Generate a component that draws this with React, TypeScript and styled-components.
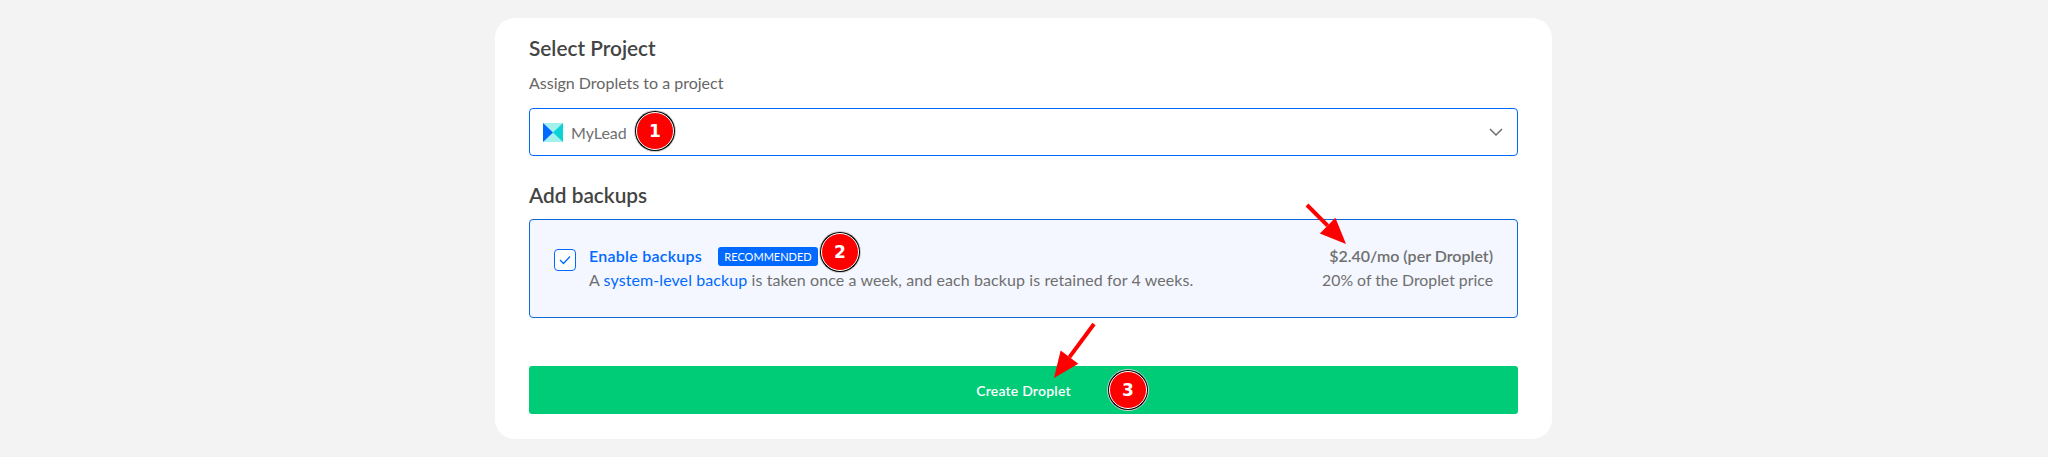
import React from "react";
import styled, { createGlobalStyle } from "styled-components";

const GlobalStyle = createGlobalStyle`
  html, body {
    margin: 0;
    padding: 0;
    height: 457px;
    overflow: hidden;
    background: #f3f3f3;
    font-family: "Lato", "Liberation Sans", sans-serif;
  }
`;

const Page = styled.div`
  width: 2048px;
  height: 457px;
  padding-top: 18px;
  box-sizing: border-box;
`;

const Card = styled.div`
  position: relative;
  width: 1057px;
  height: 421px;
  margin-left: 495px;
  padding: 18px 34px 0;
  box-sizing: border-box;
  background: #fff;
  border-radius: 20px;
`;

const Heading = styled.h2<{ $gap: number }>`
  margin: 0 0 ${(p) => p.$gap}px;
  font-size: 20.8px;
  line-height: 24px;
  font-weight: 600;
  color: #444;
`;

const SubText = styled.p`
  margin: 0 0 15px;
  font-size: 16px;
  line-height: 20px;
  color: #666;
`;

const Select = styled.div`
  height: 48px;
  margin-bottom: 27px;
  padding: 0 13px;
  box-sizing: border-box;
  display: flex;
  align-items: center;
  justify-content: space-between;
  border: 1.5px solid #0069ff;
  border-radius: 4px;
`;

const SelectChevron = styled.svg`
  margin-right: 1px;
`;

const Project = styled.div`
  display: flex;
  align-items: center;
  gap: 8px;
  font-size: 16px;
  color: #6f6f6f;
`;

const BackupBox = styled.div`
  height: 99px;
  margin-bottom: 48px;
  padding: 0 24px 2px;
  box-sizing: border-box;
  display: flex;
  align-items: center;
  justify-content: space-between;
  background: #f4f7ff;
  border: 1.5px solid #0d68d9;
  border-radius: 4px;
`;

const BackupLeft = styled.div`
  display: flex;
  align-items: flex-start;
  gap: 13px;
`;

const Checkbox = styled.div`
  width: 22px;
  height: 22px;
  margin-top: 5px;
  box-sizing: border-box;
  display: flex;
  align-items: center;
  justify-content: center;
  background: #fff;
  border: 1.5px solid #0069ff;
  border-radius: 4px;
`;

const TitleRow = styled.div`
  display: flex;
  align-items: center;
  gap: 16px;
  height: 24px;
`;

const BackupTitle = styled.span`
  font-size: 16px;
  font-weight: 600;
  letter-spacing: 0.25px;
  color: #0069ff;
`;

const Pill = styled.span`
  width: 100px;
  height: 19px;
  margin-top: 1px;
  display: inline-flex;
  align-items: center;
  justify-content: center;
  background: #0069ff;
  border-radius: 3px;
  font-size: 11px;
  color: #fff;
`;

const Description = styled.div`
  font-size: 16px;
  line-height: 24px;
  letter-spacing: 0.09px;
  color: #6f6f6f;
`;

const Anchor = styled.span`
  color: #0069ff;
`;

const Price = styled.div`
  text-align: right;
  font-size: 16px;
  line-height: 24px;
  color: #6f6f6f;
`;

const PriceMain = styled.div`
  font-weight: 600;
`;

const PriceNote = styled.div`
  font-size: 15.8px;
`;

const CreateButton = styled.div`
  height: 48px;
  display: flex;
  align-items: center;
  justify-content: center;
  background: #00cc78;
  border-radius: 3px;
  font-size: 14px;
  font-weight: 600;
  letter-spacing: 0.2px;
  color: #fff;
`;

const Marker = styled.div<{ $left: number; $top: number }>`
  position: absolute;
  left: ${(p) => p.$left}px;
  top: ${(p) => p.$top}px;
  width: 36px;
  height: 36px;
  display: flex;
  align-items: center;
  justify-content: center;
  background: #ff0000;
  border-radius: 50%;
  border: 1px solid #fff;
  box-shadow: 0 0 0 1px #000, 0 0 0 2px #ccc;
  font-family: "DejaVu Sans", sans-serif;
  font-size: 17px;
  font-weight: 700;
  color: #fff;
  box-sizing: content-box;
`;

const ArrowLayer = styled.svg`
  position: absolute;
  left: 0;
  top: 0;
  pointer-events: none;
`;

const Arrow = ({ x1, y1, x2, y2 }: { x1: number; y1: number; x2: number; y2: number }) => {
  const len = Math.hypot(x2 - x1, y2 - y1);
  const ux = (x2 - x1) / len;
  const uy = (y2 - y1) / len;
  const headBase = 26;
  const headHalf = 11;
  const bx = x2 - ux * headBase;
  const by = y2 - uy * headBase;
  return (
    <>
      <line x1={x1} y1={y1} x2={bx} y2={by} stroke="#ff0000" strokeWidth={4} />
      <polygon
        fill="#ff0000"
        points={`${x2},${y2} ${bx - uy * headHalf},${by + ux * headHalf} ${bx + uy * headHalf},${by - ux * headHalf}`}
      />
    </>
  );
};

const App = () => (
  <>
    <GlobalStyle />
    <Page>
      <Card>
        <Heading $gap={13}>Select Project</Heading>
        <SubText>Assign Droplets to a project</SubText>
        <Select>
          <Project>
            <svg width="20" height="19" viewBox="0 0 20 19">
              <rect width="20" height="19" fill="#a2f1ef" />
              <polygon points="0,0 10,9.5 0,19" fill="#0069ff" />
              <polygon points="20,0 10,9.5 20,19" fill="#0bd3d3" />
            </svg>
            MyLead
          </Project>
          <SelectChevron width="14" height="8" viewBox="0 0 14 8" fill="none">
            <path d="M1 1l6 6 6-6" stroke="#6f6f6f" strokeWidth="1.5" />
          </SelectChevron>
        </Select>
        <Heading $gap={12}>Add backups</Heading>
        <BackupBox>
          <BackupLeft>
            <Checkbox>
              <svg width="12" height="10" viewBox="0 0 12 10" fill="none">
                <path d="M1 5l3.5 3.5L11 1.5" stroke="#0069ff" strokeWidth="1.3" />
              </svg>
            </Checkbox>
            <div>
              <TitleRow>
                <BackupTitle>Enable backups</BackupTitle>
                <Pill>RECOMMENDED</Pill>
              </TitleRow>
              <Description>
                A <Anchor>system-level backup</Anchor> is taken once a week, and each backup is retained for 4 weeks.
              </Description>
            </div>
          </BackupLeft>
          <Price>
            <PriceMain>$2.40/mo (per Droplet)</PriceMain>
            <PriceNote>20% of the Droplet price</PriceNote>
          </Price>
        </BackupBox>
        <CreateButton>Create Droplet</CreateButton>
        <ArrowLayer width="1057" height="421">
          <Arrow x1={812} y1={187} x2={851} y2={226} />
          <Arrow x1={599} y1={306} x2={559} y2={360} />
        </ArrowLayer>
        <Marker $left={141} $top={94}>1</Marker>
        <Marker $left={326} $top={215}>2</Marker>
        <Marker $left={614} $top={353}>3</Marker>
      </Card>
    </Page>
  </>
);

export default App;
